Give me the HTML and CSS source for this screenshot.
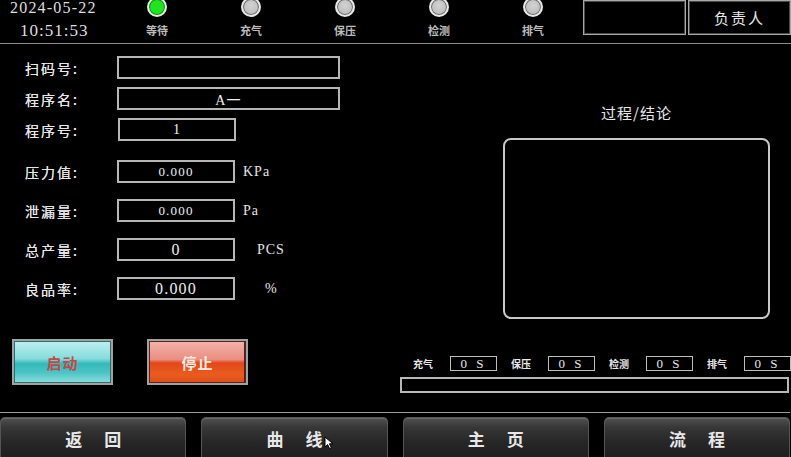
FILE: index.html
```html
<!DOCTYPE html>
<html lang="zh-CN">
<head>
<meta charset="utf-8">
<title>检测</title>
<link rel="stylesheet" href="styles.css">
</head>
<body>
<div class="screen">
  <header class="top">
    <div class="clock">
      <div class="date">2024-05-22</div>
      <div class="time">10:51:53</div>
    </div>
    <div class="states">
      <div class="state"><span class="lamp on"></span><span class="state-label">等待</span></div>
      <div class="state"><span class="lamp"></span><span class="state-label">充气</span></div>
      <div class="state"><span class="lamp"></span><span class="state-label">保压</span></div>
      <div class="state"><span class="lamp"></span><span class="state-label">检测</span></div>
      <div class="state"><span class="lamp"></span><span class="state-label">排气</span></div>
    </div>
    <div class="top-box"></div>
    <div class="top-box owner">负责人</div>
  </header>

  <main class="main">
    <section class="left">
      <div class="form">
        <div class="group">
          <div class="row"><span class="label">扫码号:</span><span class="field wide"></span></div>
          <div class="row"><span class="label">程序名:</span><span class="field wide v13">A一</span></div>
          <div class="row"><span class="label">程序号:</span><span class="field narrow v13 shift">1</span></div>
        </div>
        <div class="group group-b">
          <div class="row"><span class="label">压力值:</span><span class="field narrow v12">0.000</span><span class="unit">KPa</span></div>
          <div class="row"><span class="label">泄漏量:</span><span class="field narrow v12">0.000</span><span class="unit">Pa</span></div>
          <div class="row"><span class="label">总产量:</span><span class="field narrow v15">0</span><span class="unit unit-pcs">PCS</span></div>
          <div class="row"><span class="label">良品率:</span><span class="field narrow v16">0.000</span><span class="unit unit-pct">%</span></div>
        </div>
      </div>
      <div class="actions">
        <div class="btn btn-start">启动</div>
        <div class="btn btn-stop">停止</div>
      </div>
    </section>

    <section class="right">
      <div class="result-title">过程/结论</div>
      <div class="result-box"></div>
      <div class="timers">
        <div class="timer"><span class="timer-label">充气</span><span class="timer-val">0 S</span></div>
        <div class="timer"><span class="timer-label">保压</span><span class="timer-val">0 S</span></div>
        <div class="timer"><span class="timer-label">检测</span><span class="timer-val">0 S</span></div>
        <div class="timer"><span class="timer-label">排气</span><span class="timer-val">0 S</span></div>
      </div>
      <div class="progress"></div>
    </section>
  </main>

  <nav class="nav">
    <div class="nav-btn"><span>返</span><span>回</span></div>
    <div class="nav-btn"><span>曲</span><span>线</span></div>
    <div class="nav-btn"><span>主</span><span>页</span></div>
    <div class="nav-btn"><span>流</span><span>程</span></div>
  </nav>

  <svg class="cursor" width="11" height="14" viewBox="0 0 11 14">
    <path d="M1 1 L1 11 L3.6 8.6 L5.6 12.6 L7.4 11.8 L5.4 7.8 L9 7.8 Z" fill="#fff" stroke="#000" stroke-width="1"/>
  </svg>
</div>
</body>
</html>
```

FILE: styles.css
```css
html, body {
  margin: 0;
  padding: 0;
  background: #000;
}
body {
  font-family: "Noto Sans CJK SC", "Liberation Sans", sans-serif;
  color: #e4e4e4;
}
.screen {
  position: relative;
  width: 791px;
  height: 457px;
  overflow: hidden;
  background: #000;
}

/* header */
.top {
  display: flex;
  height: 43px;
  border-bottom: 1px solid #8c8c8c;
}
.clock {
  width: 100px;
  padding-left: 10px;
  font-family: "Liberation Serif", serif;
  color: #dedede;
}
.date {
  font-size: 16px;
  line-height: 14px;
  letter-spacing: 1.2px;
  margin-top: 1px;
}
.time {
  font-size: 17px;
  line-height: 15px;
  letter-spacing: 1px;
  margin-top: 8px;
  padding-left: 10px;
}
.states {
  display: flex;
  width: 470px;
}
.state {
  width: 94px;
  display: flex;
  flex-direction: column;
  align-items: center;
}
.lamp {
  width: 16px;
  height: 16px;
  margin-top: -3px;
  border-radius: 50%;
  border: 2px solid #e8e8e8;
  background: radial-gradient(circle at 50% 40%, #d2d2d2, #b4b4b4);
  box-shadow: inset 0 0 0 1px #6a6a6a;
}
.lamp.on {
  background: #1fe41f;
  box-shadow: inset 0 0 0 1px #0c8c0c;
}
.state-label {
  margin-top: 7px;
  font-size: 11px;
  line-height: 13px;
  font-weight: 700;
  color: #bcbcbc;
}
.top-box {
  width: 101px;
  height: 33px;
  margin-left: 3px;
  border: 1px solid #a8a8a8;
  box-shadow: inset 0 0 0 1px #4a4a4a;
}
.top-box + .top-box {
  margin-left: 2px;
}
.owner {
  display: flex;
  align-items: center;
  justify-content: center;
  font-size: 15px;
  letter-spacing: 2px;
  color: #e8e8e8;
}

/* main */
.main {
  display: flex;
  height: 368px;
}
.left {
  width: 400px;
  padding-top: 12px;
  box-sizing: border-box;
}
.form {
  display: flex;
  flex-direction: column;
}
.group {
  display: flex;
  flex-direction: column;
  gap: 8px;
}
.group-b {
  margin-top: 19px;
  gap: 16px;
}
.row {
  display: flex;
  align-items: center;
  height: 23px;
}
.label {
  box-sizing: border-box;
  width: 117px;
  padding-left: 25px;
  font-size: 14px;
  letter-spacing: 2px;
  color: #e6e6e6;
  text-shadow: 0 0 0.4px #e6e6e6;
}
.field {
  box-sizing: border-box;
  height: 23px;
  border: 2px solid #b6b6b6;
  display: flex;
  align-items: center;
  justify-content: center;
  font-family: "Liberation Serif", "Noto Sans CJK SC", serif;
  letter-spacing: 1.2px;
  color: #f0f0f0;
}
.field.wide { width: 223px; }
.field.narrow { width: 118px; }
.field.shift { margin-left: 1px; }
.v12 { font-size: 13px; }
.v13 { font-size: 14px; }
.v15 { font-size: 16px; }
.v16 { font-size: 16px; }
.unit {
  margin-left: 8px;
  font-family: "Liberation Serif", serif;
  font-size: 14px;
  letter-spacing: 1px;
  color: #e6e6e6;
}
.unit-pcs { margin-left: 22px; }
.unit-pct { margin-left: 30px; }

.actions {
  display: flex;
  gap: 34px;
  padding-left: 12px;
  margin-top: 39px;
}
.btn {
  box-sizing: border-box;
  width: 101px;
  height: 46px;
  border: 2px solid #a2a2a2;
  display: flex;
  align-items: center;
  justify-content: center;
  font-size: 15px;
  font-weight: 700;
  letter-spacing: 1px;
}
.btn-start {
  background: linear-gradient(#bdf0f0 0%, #86dcdc 42%, #34b9b9 54%, #4cc4c4 75%, #8ddede 100%);
  box-shadow: inset 0 0 0 1px #2c6e6e;
  color: #c44848;
}
.btn-stop {
  background: linear-gradient(#f2b4ac 0%, #ea8e80 44%, #e2481a 52%, #ea5c1e 80%, #dc4c18 100%);
  box-shadow: inset 0 0 0 1px #5a2424, inset -2px 0 0 #4a2020;
  color: #f8ece6;
}

.right {
  width: 391px;
  padding-top: 59px;
  box-sizing: border-box;
}
.result-title {
  width: 267px;
  margin-left: 103px;
  text-align: center;
  font-size: 15px;
  line-height: 20px;
  letter-spacing: 1px;
  color: #e8e8e8;
}
.result-box {
  box-sizing: border-box;
  width: 267px;
  height: 181px;
  margin-left: 103px;
  margin-top: 15px;
  border: 2px solid #c8c8c8;
  border-radius: 8px;
}
.timers {
  display: flex;
  gap: 14px;
  padding-left: 13px;
  margin-top: 37px;
  height: 15px;
  align-items: center;
}
.timer {
  display: flex;
  align-items: center;
}
.timer-label {
  width: 37px;
  font-size: 10px;
  font-weight: 700;
  color: #e8e8e8;
}
.timer-val {
  box-sizing: border-box;
  width: 47px;
  height: 15px;
  border: 1px solid #bdbdbd;
  display: flex;
  align-items: center;
  justify-content: center;
  font-family: "Liberation Serif", serif;
  font-size: 13px;
  letter-spacing: 3px;
  color: #e8e8e8;
}
.progress {
  box-sizing: border-box;
  width: 389px;
  height: 16px;
  margin-top: 6px;
  border: 2px solid #b8b8b8;
}

/* nav */
.nav {
  display: grid;
  grid-template-columns: repeat(4, 1fr);
  gap: 15px;
  width: 790px;
  padding-top: 4px;
  border-top: 1px solid #9a9a9a;
}
.nav-btn {
  box-sizing: border-box;
  height: 46px;
  border: 1px solid #555;
  border-bottom: none;
  border-radius: 5px 5px 0 0;
  background: linear-gradient(#505050 0%, #363636 22%, #262626 55%, #1c1c1c 100%);
  box-shadow: inset 0 1px 0 #6a6a6a;
  display: flex;
  align-items: center;
  justify-content: center;
  gap: 22px;
  font-size: 17px;
  font-weight: 700;
  color: #e8e8e8;
  padding-bottom: 4px;
}

.cursor {
  position: absolute;
  left: 324px;
  top: 436px;
}
```
